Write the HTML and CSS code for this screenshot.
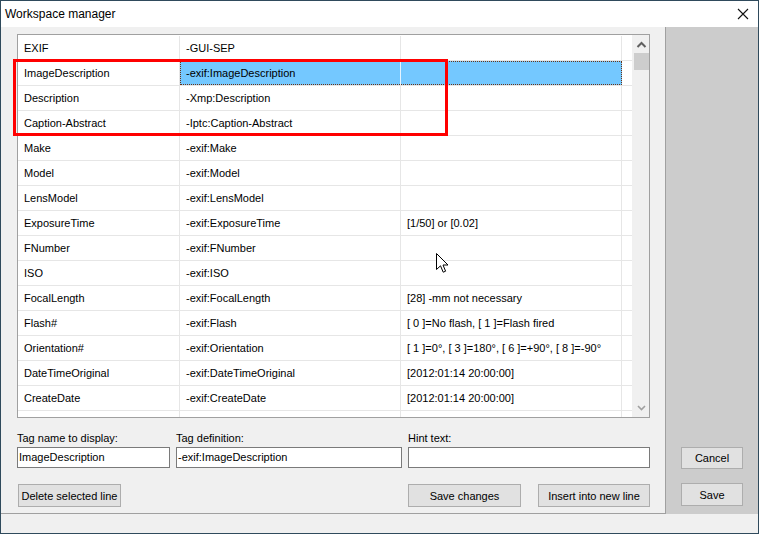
FILE: index.html
```html
<!DOCTYPE html>
<html>
<head>
<meta charset="utf-8">
<link rel="stylesheet" href="styles.css">
</head>
<body>
<div class="window">
  <div class="titlebar">
    <span class="title">Workspace manager</span>
    <svg class="close" width="12" height="12" viewBox="0 0 12 12"><path d="M1 1 L11 11 M11 1 L1 11" stroke="#111" stroke-width="1.1" fill="none"/></svg>
  </div>
  <div class="main">
    <div class="left">
      <div class="grid">
        <div class="rows">
          <div class="row"><div class="c c1">EXIF</div><div class="c c2">-GUI-SEP</div><div class="c c3"></div></div>
          <div class="row sel"><div class="c c1">ImageDescription</div><div class="selbox"><div class="c c2">-exif:ImageDescription</div><div class="c c3"></div></div></div>
          <div class="row"><div class="c c1">Description</div><div class="c c2">-Xmp:Description</div><div class="c c3"></div></div>
          <div class="row"><div class="c c1">Caption-Abstract</div><div class="c c2">-Iptc:Caption-Abstract</div><div class="c c3"></div></div>
          <div class="row"><div class="c c1">Make</div><div class="c c2">-exif:Make</div><div class="c c3"></div></div>
          <div class="row"><div class="c c1">Model</div><div class="c c2">-exif:Model</div><div class="c c3"></div></div>
          <div class="row"><div class="c c1">LensModel</div><div class="c c2">-exif:LensModel</div><div class="c c3"></div></div>
          <div class="row"><div class="c c1">ExposureTime</div><div class="c c2">-exif:ExposureTime</div><div class="c c3">[1/50] or [0.02]</div></div>
          <div class="row"><div class="c c1">FNumber</div><div class="c c2">-exif:FNumber</div><div class="c c3"></div></div>
          <div class="row"><div class="c c1">ISO</div><div class="c c2">-exif:ISO</div><div class="c c3"></div></div>
          <div class="row"><div class="c c1">FocalLength</div><div class="c c2">-exif:FocalLength</div><div class="c c3">[28] -mm not necessary</div></div>
          <div class="row"><div class="c c1">Flash#</div><div class="c c2">-exif:Flash</div><div class="c c3">[ 0 ]=No flash, [ 1 ]=Flash fired</div></div>
          <div class="row"><div class="c c1">Orientation#</div><div class="c c2">-exif:Orientation</div><div class="c c3">[ 1 ]=0°, [ 3 ]=180°, [ 6 ]=+90°, [ 8 ]=-90°</div></div>
          <div class="row"><div class="c c1">DateTimeOriginal</div><div class="c c2">-exif:DateTimeOriginal</div><div class="c c3">[2012:01:14 20:00:00]</div></div>
          <div class="row"><div class="c c1">CreateDate</div><div class="c c2">-exif:CreateDate</div><div class="c c3">[2012:01:14 20:00:00]</div></div>
          <div class="row"><div class="c c1"></div><div class="c c2"></div><div class="c c3"></div></div>
        </div>
        <div class="scrollbar">
          <svg class="arrow" width="15" height="16" viewBox="0 0 15 16"><path d="M3.5 10 L7.5 6 L11.5 10" stroke="#606060" stroke-width="2" fill="none"/></svg>
          <div class="thumb"></div>
          <div class="track"></div>
          <svg class="arrow" width="15" height="16" viewBox="0 0 15 16"><path d="M4 6 L7.5 9.5 L11 6" stroke="#a0a0a0" stroke-width="1.6" fill="none"/></svg>
        </div>
      </div>
      <div class="form">
        <div class="field">
          <label class="lbl">Tag name to display:</label>
          <div class="input">ImageDescription</div>
        </div>
        <div class="field">
          <label class="lbl">Tag definition:</label>
          <div class="input">-exif:ImageDescription</div>
        </div>
        <div class="field">
          <label class="lbl">Hint text:</label>
          <div class="input"></div>
        </div>
      </div>
      <div class="actions">
        <button class="btn b-del">Delete selected line</button>
        <div class="spacer"></div>
        <button class="btn b-save">Save changes</button>
        <button class="btn b-ins">Insert into new line</button>
      </div>
    </div>
    <div class="right">
      <button class="btn b-side b-cancel">Cancel</button>
      <button class="btn b-side">Save</button>
    </div>
  </div>
  <div class="status"></div>
  <div class="redbox"></div>
  <svg class="cursor" width="13" height="21" viewBox="0 0 13 21"><path d="M0.5 0.5 L0.5 16.5 L4.5 12.8 L7.2 19.2 L9.6 18.2 L7 12 L12 12 Z" fill="#fff" stroke="#000" stroke-width="1"/></svg>
</div>
</body>
</html>
```

FILE: styles.css
```css
* { box-sizing: border-box; }
html, body { margin: 0; padding: 0; }
body {
  font-family: "Liberation Sans", Arial, sans-serif;
  font-size: 11px;
  color: #000;
  background: #fff;
}
.window {
  position: relative;
  width: 759px;
  height: 534px;
  border: 1px solid #2f4a5c;
  display: flex;
  flex-direction: column;
  overflow: hidden;
}
.titlebar {
  height: 26px;
  background: #fff;
  display: flex;
  align-items: center;
  justify-content: space-between;
  padding: 0 9px 1px 4px;
}
.title { font-size: 12px; }
.main {
  display: flex;
  height: 487px;
}
.left {
  width: 665px;
  background: #f0f0f0;
  border-right: 1px solid #a0a0a0;
  border-bottom: 1px solid #a0a0a0;
  padding: 7px 0 0 16px;
}
.right {
  flex: 1;
  background: #cccccc;
  display: flex;
  flex-direction: column;
  justify-content: flex-end;
  padding: 0 0 8px 15px;
  gap: 14px;
}
.status {
  flex: 1;
  background: #f0f0f0;
}
.grid {
  width: 633px;
  height: 384px;
  border: 1px solid #a0a0a0;
  background: #fff;
  display: flex;
  overflow: hidden;
}
.rows {
  width: 614px;
  padding-top: 1px;
  overflow: hidden;
}
.row {
  display: flex;
  height: 25px;
  border-bottom: 1px solid #e6e6e6;
}
.c {
  height: 24px;
  line-height: 24px;
  padding-left: 6px;
  border-right: 1px solid #e6e6e6;
  white-space: nowrap;
  overflow: hidden;
}
.c1 { width: 162px; }
.c2 { width: 221px; }
.c3 { width: 221px; }
.selbox {
  display: flex;
  position: relative;
  background: #74c8ff;
  outline: 1px dotted #6a3418;
  outline-offset: -1px;
}
.sel .c2 { border-right-color: #e6f4ff; }
.sel .c3 { border-right-color: transparent; }
.scrollbar {
  width: 17px;
  margin-left: 0;
  background: #f0f0f0;
  display: flex;
  flex-direction: column;
  align-items: center;
  padding: 2px 0 1px 1px;
}
.arrow { flex: none; }
.thumb {
  width: 15px;
  height: 17px;
  background: #cdcdcd;
  flex: none;
}
.track { flex: 1; }
.form {
  display: grid;
  grid-template-columns: 153px 226px 242px;
  column-gap: 6px;
  margin-top: 13px;
}
.field { display: flex; flex-direction: column; }
.lbl { height: 16px; line-height: 14px; font-size: 11px; }
.input {
  height: 21px;
  border: 1px solid #7a7a7a;
  background: #fff;
  line-height: 19px;
  padding-left: 1px;
  white-space: nowrap;
}
.actions {
  display: flex;
  margin-top: 16px;
  width: 633px;
  gap: 17px;
}
.spacer { flex: 1; }
.btn {
  height: 23px;
  background: #e1e1e1;
  border: 1px solid #adadad;
  font-family: inherit;
  font-size: 11px;
  color: #000;
  padding: 0;
  margin: 0;
}
.b-del { width: 103px; margin-left: 1px; }
.b-save { width: 113px; }
.b-ins { width: 112px; }
.b-side { width: 62px; }
.b-cancel { height: 22px; }
.redbox {
  position: absolute;
  left: 12px;
  top: 58px;
  width: 435px;
  height: 77px;
  border: 3px solid #ff0000;
}
.cursor {
  position: absolute;
  left: 435px;
  top: 252px;
}
```
